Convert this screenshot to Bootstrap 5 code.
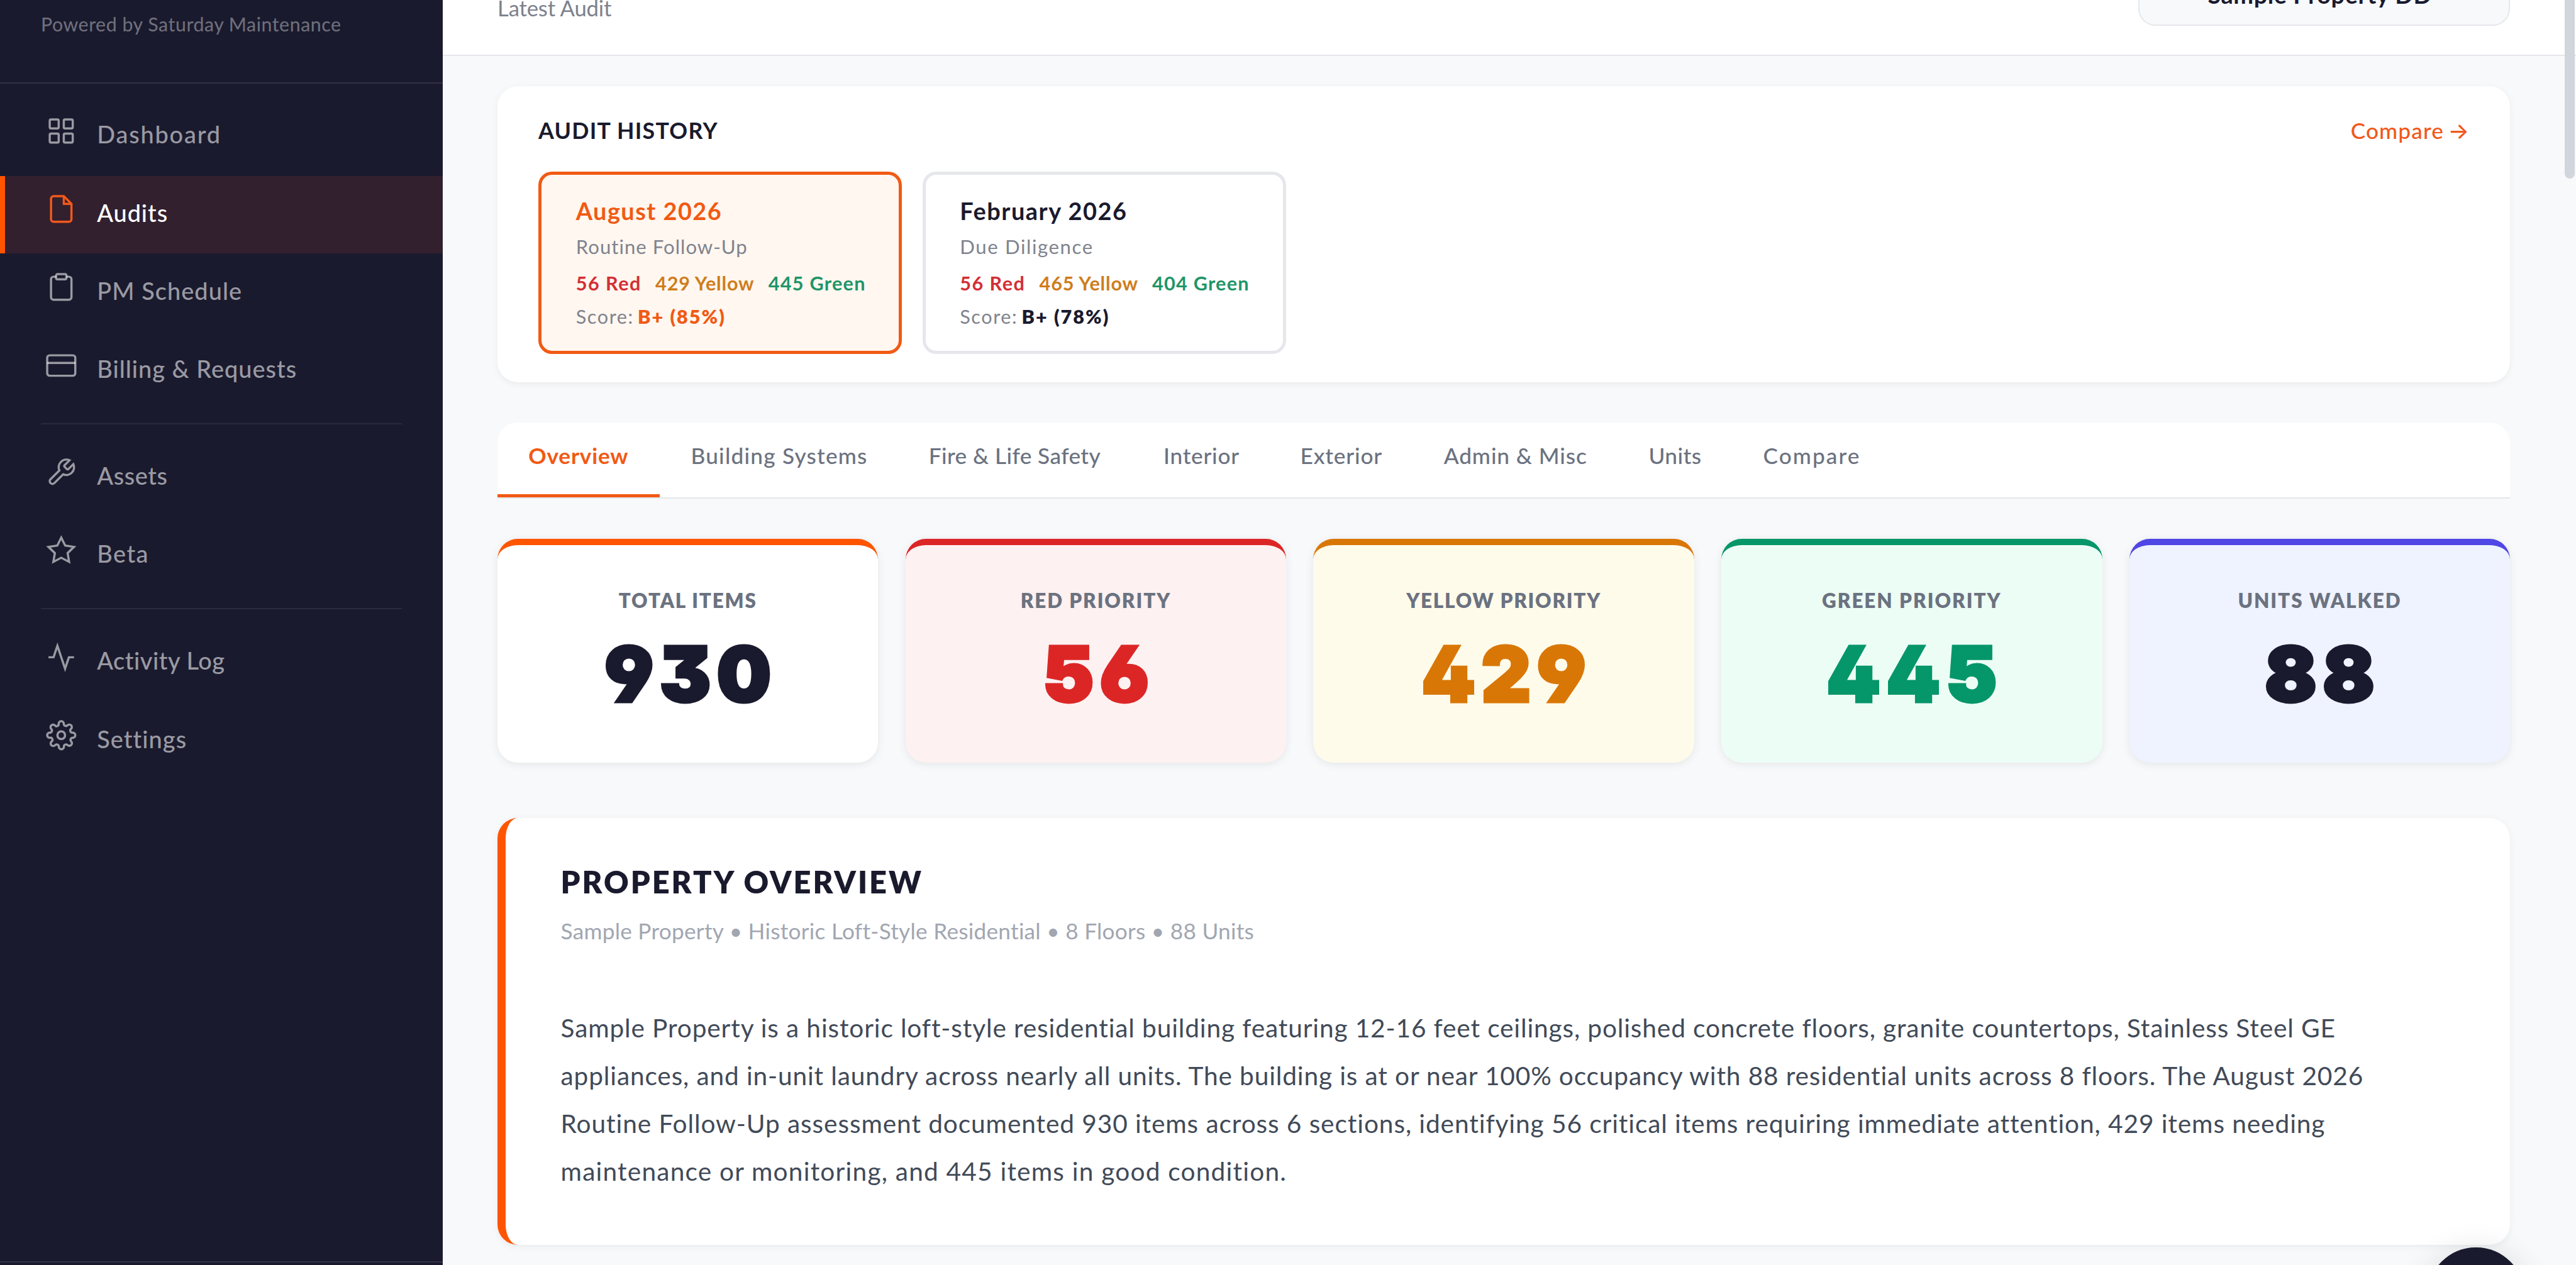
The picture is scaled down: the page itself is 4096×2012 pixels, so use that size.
<!DOCTYPE html>
<html lang="en">
<head>
<meta charset="utf-8">
<meta name="viewport" content="width=device-width, initial-scale=1">
<title>Audits</title>
<link href="https://cdn.jsdelivr.net/npm/bootstrap@5.3.0/dist/css/bootstrap.min.css" rel="stylesheet">
<style>
/* --u is one design unit; every size is a multiple of it */
:root{--u:2.7091px}
body{font-family:Lato,"Open Sans",sans-serif;background:#f8f9fb;color:#1a1a2e;height:100vh;overflow:hidden;font-size:calc(14*var(--u))}
/* sidebar */
.side{width:calc(259.8*var(--u));background:#1a1a2e}
.side-brand{height:calc(49*var(--u));padding:calc(6.1*var(--u)) calc(24*var(--u)) 0;border-bottom:var(--u) solid rgba(255,255,255,.1);font-size:calc(11.2*var(--u));line-height:calc(16*var(--u));color:rgba(255,255,255,.4)}
.side-nav{padding-top:calc(8.3*var(--u))}
.side-link{height:calc(45.5*var(--u));margin-bottom:calc(.4*var(--u));padding-left:calc(24*var(--u));gap:calc(12*var(--u));border-left:calc(3*var(--u)) solid transparent;color:rgba(255,255,255,.56);font-size:calc(14*var(--u));font-weight:500;text-decoration:none;line-height:calc(20*var(--u))}
.side-link svg{width:calc(18*var(--u));height:calc(18*var(--u));fill:none;stroke:currentColor;stroke-width:1.7;margin-bottom:calc(6.4*var(--u))}
.side-link.on{background:#32202e;border-left-color:#ff5500;color:#fff}
.side-link.on svg{color:#f4591a}
.side-link span{margin-top:calc(-1.8*var(--u))}
.side-rule{height:var(--u);margin:calc(7.8*var(--u)) calc(24*var(--u)) calc(8.4*var(--u));background:rgba(255,255,255,.07)}
.side-foot{height:calc(2.3*var(--u));border-top:var(--u) solid rgba(255,255,255,.1)}
/* header */
.pane{min-width:0}
.topbar{height:calc(32.7*var(--u));padding:0 calc(38.7*var(--u)) 0 calc(32.2*var(--u));background:#fff;border-bottom:var(--u) solid #e5e7eb}
.topbar-sub{font-size:calc(12.8*var(--u));line-height:calc(9.4*var(--u));color:#7d818c}
.prop-select{width:calc(218.3*var(--u));height:calc(38*var(--u));margin-top:calc(-22.8*var(--u));padding:calc(1.7*var(--u)) calc(5*var(--u)) 0 0;background:#f8f9fb;border:var(--u) solid #e5e7eb;border-radius:calc(10*var(--u));font-size:calc(14*var(--u));font-weight:700}
.content{padding:calc(17.8*var(--u)) calc(38.7*var(--u)) 0 calc(32.2*var(--u))}
.panel{background:#fff;border-radius:calc(12*var(--u));box-shadow:0 calc(1*var(--u)) calc(4*var(--u)) rgba(0,0,0,.06)}
/* audit history */
.history{height:calc(173.8*var(--u));padding:calc(16.6*var(--u)) calc(24*var(--u)) 0;margin-bottom:calc(23.9*var(--u))}
.history-head{height:calc(19*var(--u));margin-bottom:calc(14.5*var(--u));line-height:calc(19*var(--u))}
.history-title{font-size:calc(13.2*var(--u));font-weight:700;margin:0;line-height:inherit}
.cmp{font-size:calc(13*var(--u));font-weight:500;color:#f1581a;text-decoration:none}
.cmp i{font-style:normal;font-family:Inter,sans-serif;margin-left:calc(-.9*var(--u))}
.tiles{gap:calc(12*var(--u))}
.tile{width:calc(213.35*var(--u));height:calc(107.4*var(--u));padding:calc(12.6*var(--u)) calc(20.2*var(--u)) 0;border:calc(2.1*var(--u)) solid #e5e7eb;border-radius:calc(8*var(--u));line-height:calc(16*var(--u));font-size:calc(11.3*var(--u));color:#80838d}
.tile b{font-weight:800;color:#1a1a2e;margin-left:calc(-.6*var(--u))}
.tile-month{font-size:calc(14*var(--u));line-height:calc(18*var(--u));font-weight:700;color:#1a1a2e}
.tile.on{background:#fff7f0;border-color:#f15a14}
.tile.on b,.tile.on .tile-month{color:#f15a14}
.tile-kind{font-size:calc(11.5*var(--u));margin-top:calc(3.85*var(--u))}
.tile-counts{margin-top:calc(5.4*var(--u));font-weight:700;gap:calc(8.2*var(--u));white-space:nowrap}
.tile-score{margin-top:calc(3.6*var(--u))}
.c-red{color:#d32f35}.c-yel{color:#cf7d1c}.c-grn{color:#1f9568}
/* tabs */
.tabs{height:calc(44.4*var(--u));border-radius:calc(12*var(--u)) calc(12*var(--u)) 0 0;background:#fff;border-bottom:var(--u) solid #e5e7eb;margin-bottom:calc(23.9*var(--u))}
.tab-link{padding:calc(10*var(--u)) 0 0 calc(18.2*var(--u));font-size:calc(13*var(--u));line-height:calc(19*var(--u));font-weight:500;color:#6b7280;border-bottom:calc(2.2*var(--u)) solid transparent;text-decoration:none;white-space:nowrap}
.tab-link.on{color:#f15a14;border-bottom-color:#f15a14;font-weight:700}
.w1{width:calc(95.3*var(--u))}.w2{width:calc(139.6*var(--u))}.w3{width:calc(137.8*var(--u))}.w4{width:calc(80.3*var(--u))}.w5{width:calc(84.2*var(--u))}.w6{width:calc(120.3*var(--u))}.w7{width:calc(67.2*var(--u))}.w8{width:calc(92*var(--u))}
/* stat cards */
.stats{gap:calc(16*var(--u));margin-bottom:calc(32.2*var(--u))}
.stat{flex:1 1 0;height:calc(131.4*var(--u));padding-top:calc(24.6*var(--u));border-top:calc(4*var(--u)) solid #ff5500;border-radius:calc(12*var(--u));text-align:center;background:#fff;box-shadow:0 calc(1*var(--u)) calc(5*var(--u)) rgba(0,0,0,.08)}
.stat-name{font-size:calc(11.6*var(--u));line-height:calc(16*var(--u));font-weight:800;color:#6b7280}
.stat-num{font-family:Inter,sans-serif;font-feature-settings:"ss01";font-weight:900;font-size:calc(44.8*var(--u));line-height:calc(48*var(--u));margin-top:calc(10.8*var(--u));letter-spacing:.08em;padding-left:.08em;-webkit-text-stroke:calc(1.8*var(--u)) currentColor}
.s-red{background:#fdf1f1;border-color:#dc2626}.s-red .stat-num{color:#dc2626}
.s-yel{background:#fffbeb;border-color:#d97706}.s-yel .stat-num{color:#d97706}
.s-grn{background:#ecfdf5;border-color:#059669}.s-grn .stat-num{color:#059669}
.s-ind{background:#eff3ff;border-color:#4f46e5}
/* property overview */
.about{height:calc(250.8*var(--u));padding:calc(25.6*var(--u)) calc(30*var(--u)) 0 calc(32.3*var(--u));border-left:calc(5*var(--u)) solid #ff5500;white-space:nowrap}
.about h2{font-size:calc(18*var(--u));line-height:calc(24*var(--u));font-weight:800;margin:0}
.about-sub{font-size:calc(13*var(--u));line-height:calc(18*var(--u));margin-top:calc(7.9*var(--u));color:#a1a6b1}
.about-text{font-size:calc(15*var(--u));line-height:calc(28.04*var(--u));margin:calc(33.9*var(--u)) 0 0;color:#414a58}
/* scroll thumb and floating button over the page */
.float-layer{position:absolute;inset:0;overflow:hidden;pointer-events:none}
.thumb{position:absolute;top:calc(-10*var(--u));right:calc(.7*var(--u));width:calc(6*var(--u));height:calc(114.7*var(--u));border-radius:calc(3*var(--u));background:#d1d5dc}
.fab{position:absolute;left:calc(1424.9*var(--u));top:calc(732.4*var(--u));width:calc(56.6*var(--u));height:calc(56.6*var(--u));border-radius:50%;background:#1a1a2e;box-shadow:0 calc(4*var(--u)) calc(20*var(--u)) rgba(0,0,0,.16)}
/* tracking, in thousandths of an em */
.ls--4{letter-spacing:-.0044em}.ls-8{letter-spacing:.0076em}.ls-12{letter-spacing:.012em}.ls-14{letter-spacing:.014em}.ls-15{letter-spacing:.015em}.ls-18{letter-spacing:.0177em}.ls-21{letter-spacing:.0211em}.ls-22{letter-spacing:.0222em}.ls-24{letter-spacing:.024em}.ls-26{letter-spacing:.0262em}.ls-28{letter-spacing:.0275em}.ls-30{letter-spacing:.0296em}.ls-32{letter-spacing:.0323em}.ls-35{letter-spacing:.0345em}.ls-38{letter-spacing:.038em}.ls-40{letter-spacing:.0397em}.ls-42{letter-spacing:.0416em}.ls-48{letter-spacing:.048em}.ls-52{letter-spacing:.0517em}.ls-55{letter-spacing:.055em}.ls-58{letter-spacing:.0579em}.ls-62{letter-spacing:.0615em}.ls-64{letter-spacing:.0637em}.ls-66{letter-spacing:.066em}
</style>
<script src="https://cdn.jsdelivr.net/npm/bootstrap@5.3.0/dist/js/bootstrap.bundle.min.js"></script>
</head>
<body class="d-flex position-relative">
<aside class="side d-flex flex-column flex-shrink-0">
  <div class="side-brand"><span class="ls-18">Powered by Saturday Maintenance</span></div>
  <nav class="side-nav flex-grow-1">
    <a class="side-link d-flex align-items-center"><svg viewBox="0 0 24 24"><rect x="3" y="3" width="7" height="7" rx="1"/><rect x="14" y="3" width="7" height="7" rx="1"/><rect x="14" y="14" width="7" height="7" rx="1"/><rect x="3" y="14" width="7" height="7" rx="1"/></svg><span class="ls-48">Dashboard</span></a>
    <a class="side-link on d-flex align-items-center"><svg viewBox="0 0 24 24"><path d="M14 2H6a2 2 0 0 0-2 2v16a2 2 0 0 0 2 2h12a2 2 0 0 0 2-2V8z"/><path d="M14 2v6h6"/></svg><span class="ls-24">Audits</span></a>
    <a class="side-link d-flex align-items-center"><svg viewBox="0 0 24 24"><path d="M16 4h2a2 2 0 0 1 2 2v14a2 2 0 0 1-2 2H6a2 2 0 0 1-2-2V6a2 2 0 0 1 2-2h2"/><rect x="8" y="2" width="8" height="4" rx="1"/></svg><span class="ls-28">PM Schedule</span></a>
    <a class="side-link d-flex align-items-center"><svg viewBox="0 0 24 24"><rect x="1" y="4" width="22" height="16" rx="2"/><path d="M1 10h22"/></svg><span class="ls-26">Billing &amp; Requests</span></a>
    <div class="side-rule"></div>
    <a class="side-link d-flex align-items-center"><svg viewBox="0 0 24 24"><path d="M14.7 6.3a1 1 0 0 0 0 1.4l1.6 1.6a1 1 0 0 0 1.4 0l3.77-3.77a6 6 0 0 1-7.94 7.94l-6.91 6.91a2.12 2.12 0 0 1-3-3l6.91-6.91a6 6 0 0 1 7.94-7.94l-3.76 3.76z"/></svg><span class="ls-15">Assets</span></a>
    <a class="side-link d-flex align-items-center"><svg viewBox="0 0 24 24"><path d="M12 2l3.09 6.26L22 9.27l-5 4.87 1.18 6.88L12 17.77l-6.18 3.25L7 14.14 2 9.27l6.91-1.01z"/></svg><span class="ls-38">Beta</span></a>
    <div class="side-rule"></div>
    <a class="side-link d-flex align-items-center"><svg viewBox="0 0 24 24"><path d="M22 12h-4l-3 9L9 3l-3 9H2"/></svg><span class="ls-14">Activity Log</span></a>
    <a class="side-link d-flex align-items-center"><svg viewBox="0 0 24 24"><circle cx="12" cy="12" r="3"/><path d="M19.4 15a1.65 1.65 0 0 0 .33 1.82l.06.06a2 2 0 1 1-2.83 2.83l-.06-.06a1.65 1.65 0 0 0-2.8 1.17V21a2 2 0 0 1-4 0v-.09a1.65 1.65 0 0 0-2.9-1.08l-.06.06a2 2 0 1 1-2.83-2.83l.06-.06A1.65 1.65 0 0 0 3.09 14H3a2 2 0 0 1 0-4h.09a1.65 1.65 0 0 0 1.18-2.8l-.06-.06a2 2 0 1 1 2.83-2.83l.06.06A1.65 1.65 0 0 0 10 3.09V3a2 2 0 0 1 4 0v.09a1.65 1.65 0 0 0 2.8 1.18l.06-.06a2 2 0 1 1 2.83 2.83l-.06.06A1.65 1.65 0 0 0 20.91 10H21a2 2 0 0 1 0 4h-.09a1.65 1.65 0 0 0-1.51 1z"/></svg><span class="ls-28">Settings</span></a>
  </nav>
  <div class="side-foot"></div>
</aside>
<div class="pane flex-grow-1">
  <header class="topbar d-flex justify-content-between align-items-start">
    <div class="topbar-sub ls--4">Latest Audit</div>
    <div class="prop-select d-flex align-items-center justify-content-center ls-15">Sample Property DD</div>
  </header>
  <main class="content">
    <section class="panel history">
      <div class="history-head d-flex justify-content-between">
        <h2 class="history-title ls-35">AUDIT HISTORY</h2>
        <a class="cmp"><span class="ls-32">Compare</span> <i>→</i></a>
      </div>
      <div class="tiles d-flex">
        <div class="tile on">
          <div class="tile-month ls-38">August 2026</div>
          <div class="tile-kind ls-32">Routine Follow-Up</div>
          <div class="tile-counts d-flex"><span class="c-red ls-48">56 Red</span><span class="c-yel ls-26">429 Yellow</span><span class="c-grn ls-42">445 Green</span></div>
          <div class="tile-score"><span class="ls-52">Score:</span> <b class="ls-66">B+ (85%)</b></div>
        </div>
        <div class="tile">
          <div class="tile-month ls-40">February 2026</div>
          <div class="tile-kind ls-52">Due Diligence</div>
          <div class="tile-counts d-flex"><span class="c-red ls-48">56 Red</span><span class="c-yel ls-26">465 Yellow</span><span class="c-grn ls-40">404 Green</span></div>
          <div class="tile-score"><span class="ls-52">Score:</span> <b class="ls-66">B+ (78%)</b></div>
        </div>
      </div>
    </section>
    <nav class="tabs d-flex">
      <a class="tab-link on w1 ls-22">Overview</a>
      <a class="tab-link w2 ls-35">Building Systems</a>
      <a class="tab-link w3 ls-12">Fire &amp; Life Safety</a>
      <a class="tab-link w4 ls-21">Interior</a>
      <a class="tab-link w5 ls-24">Exterior</a>
      <a class="tab-link w6 ls-26">Admin &amp; Misc</a>
      <a class="tab-link w7 ls-12">Units</a>
      <a class="tab-link w8 ls-58">Compare</a>
    </nav>
    <section class="stats d-flex">
      <div class="stat"><div class="stat-name ls-58">TOTAL ITEMS</div><div class="stat-num">930</div></div>
      <div class="stat s-red"><div class="stat-name ls-62">RED PRIORITY</div><div class="stat-num">56</div></div>
      <div class="stat s-yel"><div class="stat-name ls-55">YELLOW PRIORITY</div><div class="stat-num">429</div></div>
      <div class="stat s-grn"><div class="stat-name ls-64">GREEN PRIORITY</div><div class="stat-num">445</div></div>
      <div class="stat s-ind"><div class="stat-name ls-64">UNITS WALKED</div><div class="stat-num">88</div></div>
    </section>
    <section class="panel about">
      <h2 class="ls-62">PROPERTY OVERVIEW</h2>
      <div class="about-sub ls-8">Sample Property • Historic Loft-Style Residential • 8 Floors • 88 Units</div>
      <p class="about-text">
        <span class="ls-21">Sample Property is a historic loft-style residential building featuring 12-16 feet ceilings, polished concrete floors, granite countertops, Stainless Steel GE</span><br>
        <span class="ls-21">appliances, and in-unit laundry across nearly all units. The building is at or near 100% occupancy with 88 residential units across 8 floors. The August 2026</span><br>
        <span class="ls-22">Routine Follow-Up assessment documented 930 items across 6 sections, identifying 56 critical items requiring immediate attention, 429 items needing</span><br>
        <span class="ls-30">maintenance or monitoring, and 445 items in good condition.</span>
      </p>
    </section>
  </main>
</div>
<div class="float-layer"><div class="thumb"></div><div class="fab"></div></div>
</body></html>
